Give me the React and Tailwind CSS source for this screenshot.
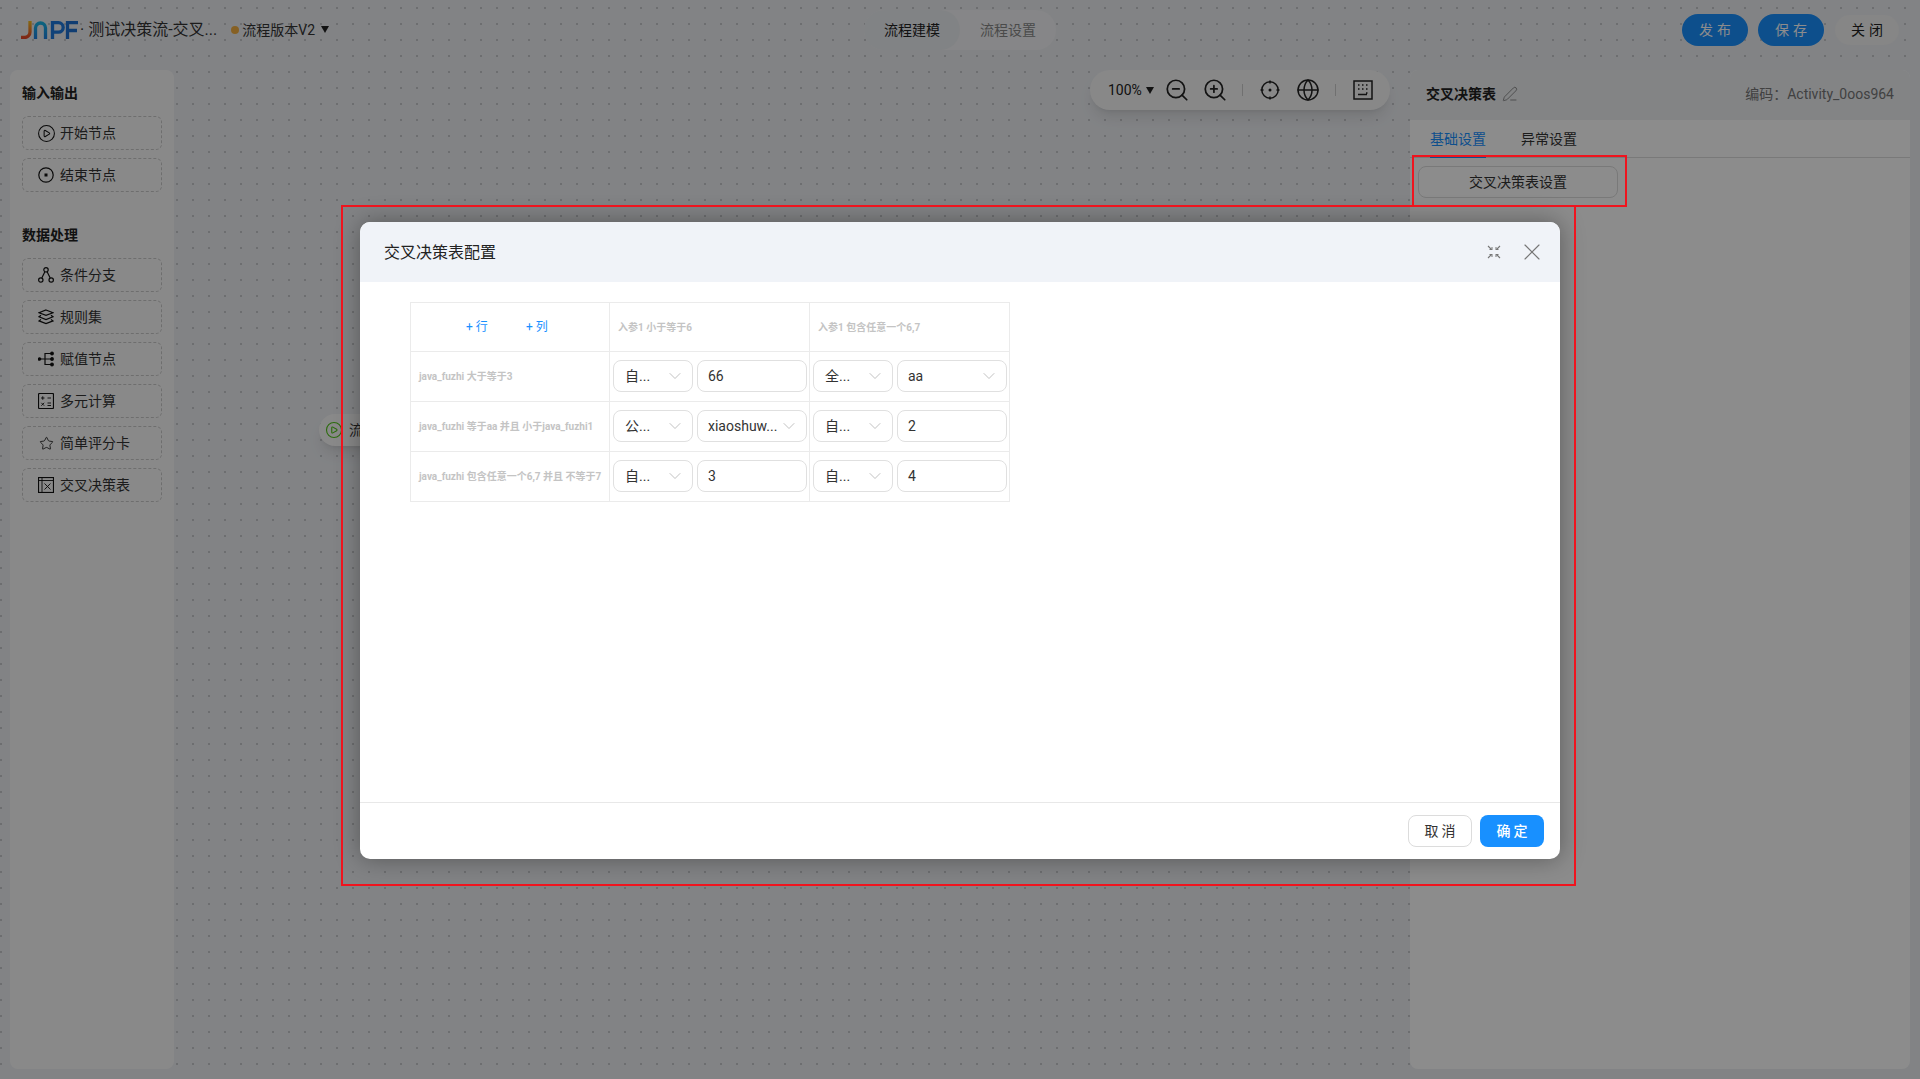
import React from 'react'
import { ChevronDown, CirclePlay, Globe, PenLine, Star, X, ZoomIn, ZoomOut } from 'lucide-react'

function Logo() {
  return (
    <svg width="57" height="18" viewBox="0 0 57 18" fill="none" strokeWidth="3.300">
      <defs>
        <linearGradient id="logoJ" x1="0" y1="0" x2="0" y2="1">
          <stop offset="0" stopColor="#f5c023" />
          <stop offset="1" stopColor="#e8482a" />
        </linearGradient>
        <linearGradient id="logoN" x1="0" y1="0" x2="0" y2="1">
          <stop offset="0" stopColor="#19b5e6" />
          <stop offset="1" stopColor="#1f7fe0" />
        </linearGradient>
      </defs>
      <path d="M9 0v11a5.500 5.500 0 0 1-5.500 5.500H0" stroke="url(#logoJ)" />
      <path d="M14.500 18V7a5 5 0 0 1 10 0v11" stroke="url(#logoN)" />
      <path d="M31.500 18V1.700h6a4.700 4.700 0 0 1 0 9.400h-6" stroke="#1e78dc" />
      <path d="M46.500 18V1.700H57M46.500 9.500H56" stroke="#1e6fd0" />
    </svg>
  )
}

function EndIcon() {
  return (
    <svg width="16" height="16" viewBox="0 0 16 16" fill="none" stroke="currentColor" strokeWidth="1.200">
      <circle cx="8" cy="8" r="7.200" />
      <rect x="6.500" y="6.500" width="3" height="3" fill="currentColor" stroke="none" />
    </svg>
  )
}

function BranchIcon() {
  return (
    <svg width="16" height="16" viewBox="0 0 16 16" fill="none" stroke="currentColor" strokeWidth="1.200">
      <circle cx="8" cy="2.800" r="2.200" />
      <circle cx="2.800" cy="13" r="2.200" />
      <circle cx="13.200" cy="13" r="2.200" />
      <path d="M6.900 4.800 3.800 11M9.100 4.800l3.100 6.200" />
    </svg>
  )
}

function LayersIcon() {
  return (
    <svg width="16" height="16" viewBox="0 0 16 16" fill="none" stroke="currentColor" strokeWidth="1.200">
      <path d="M8 1 15 3.700 8 6.400 1 3.700Z" />
      <path d="M3 6.300 1 7.800 8 10.500l7-2.700-2-1.500" />
      <path d="M3 10.400 1 11.900 8 14.600l7-2.700-2-1.500" />
    </svg>
  )
}

function AssignIcon() {
  return (
    <svg width="16" height="16" viewBox="0 0 16 16" fill="none" stroke="currentColor" strokeWidth="1.200">
      <path d="M1.500 8H7M13 2.500H7V13.500H13M7 8H13" />
      <circle cx="1.500" cy="8" r="1.200" fill="currentColor" />
      <circle cx="14" cy="2.500" r="1.300" fill="currentColor" />
      <circle cx="14" cy="8" r="1.300" fill="currentColor" />
      <circle cx="14" cy="13.500" r="1.300" fill="currentColor" />
    </svg>
  )
}

function CalcIcon() {
  return (
    <svg width="16" height="16" viewBox="0 0 16 16" fill="none" stroke="currentColor" strokeWidth="1.200">
      <rect x="0.500" y="0.500" width="15" height="15" rx="1" />
      <path d="M3 5h3.500M4.750 3.250v3.500M9.500 5H13M3.300 9.800l2.900 2.900M6.200 9.800l-2.900 2.900M9.500 10H13M9.500 12.500H13" strokeWidth="0.900" />
    </svg>
  )
}

function CrossTableIcon() {
  return (
    <svg width="16" height="16" viewBox="0 0 16 16" fill="none" stroke="currentColor" strokeWidth="1.200">
      <rect x="0.500" y="0.500" width="15" height="15" />
      <path d="M0.500 3.500h15M4 0.500v15M6.500 6.500l6 6M12.500 6.500l-6 6" strokeWidth="0.900" />
    </svg>
  )
}

function TargetIcon() {
  return (
    <svg width="20" height="20" viewBox="0 0 20 20" fill="none" stroke="currentColor" strokeWidth="1.500">
      <circle cx="10" cy="10" r="8.200" />
      <circle cx="10" cy="10" r="1.500" fill="currentColor" stroke="none" />
      <path d="M10 0.500v3M10 16.500v3M0.500 10h3M16.500 10h3" />
    </svg>
  )
}

function MapIcon() {
  return (
    <svg width="20" height="20" viewBox="0 0 20 20" fill="none" stroke="currentColor" strokeWidth="1.500">
      <rect x="1" y="1" width="18" height="18" />
      <path d="M5 5h1.500M9 5h1.500M13 5h1.500M13 9h1.500M5 9h1.500M9 9h1.500M13 13h1.500M5 14.500h9" />
    </svg>
  )
}

function CollapseIcon() {
  return (
    <svg width="14" height="14" viewBox="0 0 14 14" fill="none" stroke="currentColor" strokeWidth="1.100">
      <path d="M1 1l3.500 3.500M13 1 9.500 4.500M1 13l3.500-3.500M13 13 9.500 9.500" />
      <path d="M2.500 5h3v-3h-1v2h-2zM11.500 5h-3v-3h1v2h2zM2.500 9h3v3h-1v-2h-2zM11.500 9h-3v3h1v-2h2z" fill="currentColor" stroke="none" />
    </svg>
  )
}

function Item({ icon, label }) {
  return (
    <div className="flex h-[34px] items-center gap-[6px] rounded-md border border-dashed border-[#c9c9c9] pl-[15px] text-sm text-[#333]">
      <span className="flex w-4 justify-center text-[#111]">{icon}</span>
      {label}
    </div>
  )
}

function Select({ value, wide }) {
  return (
    <div className={`flex h-8 items-center justify-between rounded-lg border border-[#e0e0e0] pr-[7px] text-sm text-[#333] ${wide ? 'w-[110px] pl-[10px]' : 'w-20 pl-[11px]'}`}>
      <span>{value}</span>
      <ChevronDown size={20} strokeWidth={1} className="text-[#b5b5b5]" />
    </div>
  )
}

function Input({ value }) {
  return (
    <div className="flex h-8 w-[110px] items-center rounded-lg border border-[#e0e0e0] pl-[10px] text-sm text-[#333]">
      {value}
    </div>
  )
}

const rows = [
  {
    label: 'java_fuzhi 大于等于3',
    cells: [
      <><Select value="自..." /><Input value="66" /></>,
      <><Select value="全..." /><Select value="aa" wide /></>,
    ],
  },
  {
    label: 'java_fuzhi 等于aa 并且 小于java_fuzhi1',
    cells: [
      <><Select value="公..." /><Select value="xiaoshuw..." wide /></>,
      <><Select value="自..." /><Input value="2" /></>,
    ],
  },
  {
    label: 'java_fuzhi 包含任意一个6,7 并且 不等于7',
    cells: [
      <><Select value="自..." /><Input value="3" /></>,
      <><Select value="自..." /><Input value="4" /></>,
    ],
  },
]

function DecisionTable() {
  return (
    <div className="grid w-[600px] grid-cols-[199px_200px_200px] border-t border-l border-[#ebebeb]">
      <div className="flex h-[49px] items-center border-r border-b border-[#ebebeb] pl-[55px] text-xs text-[#1890ff]">
        <span className="w-[60px]">+ 行</span>
        <span>+ 列</span>
      </div>
      <div className="flex h-[49px] items-center border-r border-b border-[#ebebeb] pl-2 text-[10px] font-bold text-[#c4c4c4]">入参1 小于等于6</div>
      <div className="flex h-[49px] items-center border-r border-b border-[#ebebeb] pl-2 text-[10px] font-bold text-[#c4c4c4]">入参1 包含任意一个6,7</div>
      {rows.map((row) => (
        <React.Fragment key={row.label}>
          <div className="flex h-[50px] items-center border-r border-b border-[#ebebeb] pb-[1px] pl-2 text-[10px] font-bold whitespace-nowrap text-[#c4c4c4]">{row.label}</div>
          {row.cells.map((cell, i) => (
            <div key={i} className="flex h-[50px] items-center gap-1 border-r border-b border-[#ebebeb] pb-[1px] pl-[3px]">{cell}</div>
          ))}
        </React.Fragment>
      ))}
    </div>
  )
}

export default function App() {
  return (
    <div className="relative flex h-screen w-full flex-col overflow-hidden bg-[#edeff3] bg-[radial-gradient(circle,#c6c8cc_1px,transparent_1.2px)] bg-[size:16px_16px] bg-[position:-7px_0px] font-['Roboto','Noto_Sans_CJK_SC',sans-serif] text-[#333]">
      {/* top bar */}
      <header className="grid h-[60px] shrink-0 grid-cols-[1fr_auto_1fr] items-center px-[21px]">
        <div className="flex items-center">
          <Logo />
          <span className="ml-[2px] text-base whitespace-nowrap">· 测试决策流-交叉...</span>
          <span className="ml-[14px] h-2 w-2 rounded-full bg-[#f5b041]" />
          <span className="ml-[3px] text-sm">流程版本V2</span>
          <span className="ml-[6px] mb-[2px] h-0 w-0 border-x-[4px] border-t-[7px] border-x-transparent border-t-[#222]" />
        </div>
        <div className="flex h-10 items-center rounded-full bg-[#f4f5f7] text-sm">
          <span className="flex h-10 w-24 items-center justify-center rounded-full bg-[#eceef2] text-[#222]">流程建模</span>
          <span className="flex h-10 w-24 items-center justify-center text-[#888]">流程设置</span>
        </div>
        <div className="flex items-center justify-end gap-[10px] text-sm">
          <button className="h-8 w-[66px] rounded-full bg-[#1890ff] pl-1 tracking-[4px] text-white">发布</button>
          <button className="h-8 w-[66px] rounded-full bg-[#1890ff] pl-1 tracking-[4px] text-white">保存</button>
          <button className="ml-px h-[30px] w-16 rounded-full bg-[#f4f4f4] pl-1 tracking-[4px] text-[#222]">关闭</button>
        </div>
      </header>

      <main className="flex min-h-0 flex-1 px-[10px] pt-[10px] pb-[10px]">
        {/* left palette */}
        <aside className="flex w-[164px] shrink-0 flex-col rounded-lg bg-[#fafafa] px-3 pt-[13px]">
          <h3 className="mb-[13px] text-sm leading-[20px] font-bold text-[#222]">输入输出</h3>
          <div className="flex flex-col gap-2">
            <Item icon={<CirclePlay size={19} strokeWidth={1.300} className="shrink-0" />} label="开始节点" />
            <Item icon={<EndIcon />} label="结束节点" />
          </div>
          <h3 className="mt-[33px] mb-[13px] text-sm leading-[20px] font-bold text-[#222]">数据处理</h3>
          <div className="flex flex-col gap-2">
            <Item icon={<BranchIcon />} label="条件分支" />
            <Item icon={<LayersIcon />} label="规则集" />
            <Item icon={<AssignIcon />} label="赋值节点" />
            <Item icon={<CalcIcon />} label="多元计算" />
            <Item icon={<Star size={15} strokeWidth={1.300} />} label="简单评分卡" />
            <Item icon={<CrossTableIcon />} label="交叉决策表" />
          </div>
        </aside>

        <section className="relative flex-1">
          {/* canvas node, partly under the dialog */}
          <div className="absolute top-[344px] left-[145px] flex h-8 w-[120px] items-center gap-[6px] rounded-full bg-[#fafafa] pl-[6px] text-sm shadow-lg">
            <CirclePlay size={18} strokeWidth={1.500} className="text-[#52c41a]" />
            流程开始
          </div>
          {/* zoom toolbar */}
          <div className="absolute top-0 right-5 flex h-10 w-[300px] items-center rounded-full bg-[#f8f8f8] pl-[18px] text-sm text-[#222] shadow-lg">
            <span className="w-[33px]">100%</span>
            <span className="ml-[5px] h-0 w-0 border-x-[4px] border-t-[7px] border-x-transparent border-t-[#222]" />
            <ZoomOut size={26} strokeWidth={1.600} className="ml-[10px]" />
            <ZoomIn size={26} strokeWidth={1.600} className="ml-3" />
            <span className="ml-[14px] h-3 w-px bg-[#ccc]" />
            <span className="ml-[17px]"><TargetIcon /></span>
            <Globe size={24} strokeWidth={1.500} className="ml-4" />
            <span className="ml-[15px] h-3 w-px bg-[#ccc]" />
            <span className="ml-[17px]"><MapIcon /></span>
          </div>
        </section>

        {/* right properties panel */}
        <aside className="flex w-[500px] shrink-0 flex-col overflow-hidden rounded-lg bg-white">
          <div className="flex h-[50px] shrink-0 items-center justify-between bg-[#eef0f3] px-4 pb-[2px]">
            <div className="flex items-center gap-[6px] text-sm font-bold text-[#222]">
              交叉决策表
              <PenLine size={16} strokeWidth={1.200} className="text-[#777]" />
            </div>
            <span className="text-sm text-[#777]">编码：Activity_0oos964</span>
          </div>
          <div className="flex h-[38px] shrink-0 gap-[35px] border-b border-[#dcdcdc] pl-5 text-sm">
            <span className="h-[38px] border-b-2 border-[#1890ff] pt-[9px] text-[#1890ff]">基础设置</span>
            <span className="pt-[9px] text-[#333]">异常设置</span>
          </div>
          <div className="px-2 pt-2">
            <button className="h-8 w-[200px] rounded-lg border border-[#dcdcdc] text-sm text-[#333]">交叉决策表设置</button>
          </div>
        </aside>
      </main>

      {/* dimming mask */}
      <div className="absolute inset-0 bg-black/45" />

      {/* dialog */}
      <div className="absolute top-[222px] left-[360px] flex h-[637px] w-[1200px] flex-col overflow-hidden rounded-[10px] bg-white shadow-[0_0_24px_rgba(0,0,0,0.35)]">
        <div className="flex h-[60px] shrink-0 items-center justify-between bg-[#f0f3f8] pr-[14px] pl-6">
          <span className="pt-px text-base text-[#222]">交叉决策表配置</span>
          <div className="flex items-center gap-[17px] text-[#777]">
            <CollapseIcon />
            <X size={28} strokeWidth={1} />
          </div>
        </div>
        <div className="flex-1 pt-5 pl-[50px]">
          <DecisionTable />
        </div>
        <div className="flex h-[57px] shrink-0 items-center justify-end gap-2 border-t border-[#e8e8e8] pr-4 text-sm">
          <button className="h-8 w-16 rounded-lg border border-[#dcdcdc] pl-[3px] tracking-[3px] text-[#333]">取消</button>
          <button className="h-8 w-16 rounded-lg bg-[#1890ff] pl-[3px] font-medium tracking-[3px] text-white">确定</button>
        </div>
      </div>

      {/* red annotation boxes */}
      <div className="absolute top-[205px] left-[341px] h-[681px] w-[1235px] border-2 border-[#f0141e]" />
      <div className="absolute top-[155px] left-[1412px] h-[52px] w-[215px] border-2 border-[#f0141e]" />
    </div>
  )
}
